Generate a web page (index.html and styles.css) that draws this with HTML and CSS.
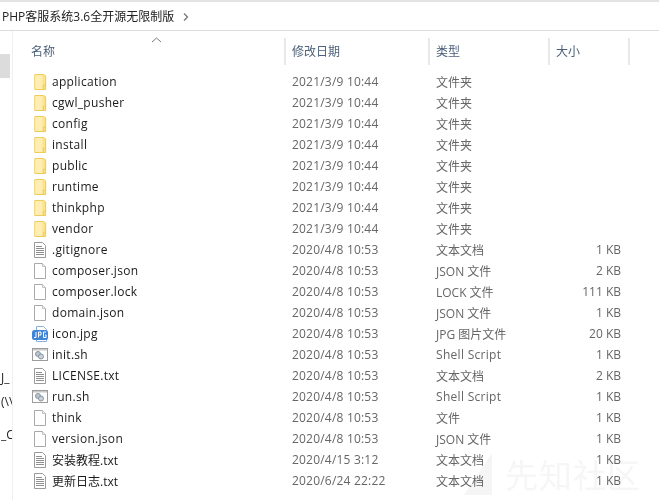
FILE: index.html
```html
<!DOCTYPE html>
<html lang="zh">
<head>
<meta charset="utf-8">
<title>PHP客服系统3.6全开源无限制版</title>
<link rel="stylesheet" href="styles.css">
</head>
<body>
<svg width="0" height="0" class="defs">
  <symbol id="folder" viewBox="0 0 16 17">
    <path d="M2.500 .5h9l2.500 1.500v14.500H2.500z" fill="#fde48a" stroke="#ecc84e"/>
    <path d="M3 1h7.500v15H3z" fill="#feeeb4"/>
    <path d="M11.500 16v-4h2" fill="none" stroke="#ecc84e"/>
  </symbol>
  <symbol id="doc" viewBox="0 0 16 16">
    <path d="M2.500 .5h8l3 3v12h-11z" fill="#fff" stroke="#a9a9a9"/>
    <path d="M10.500 .5v3h3" fill="#eee" stroke="#c4c4c4"/>
  </symbol>
  <symbol id="txt" viewBox="0 0 16 16">
    <path d="M2.500 .5h8l3 3v12h-11z" fill="#fff" stroke="#9a9a9a"/>
    <path d="M4 4.500h6M4 6.500h8M4 8.500h8M4 10.500h8M4 12.500h8" stroke="#8f8f8f"/>
  </symbol>
  <symbol id="jpg" viewBox="0 0 16 16">
    <path d="M4.500 .5h7l3 3v12h-10z" fill="#fff" stroke="#8db2dd"/>
    <rect x="0" y="4" width="16" height="10" rx="2.500" fill="#3f83d6"/>
    <path d="M4 6v5.500H2M6.500 11.500V6H9v3H6.500M14 6h-2.500v5.500H14V9h-1" fill="none" stroke="#fff"/>
  </symbol>
  <symbol id="sh" viewBox="0 0 16 16">
    <rect x=".5" y="1.500" width="15" height="12" fill="#fff" stroke="#9c9c9c"/>
    <rect x="1" y="2" width="14" height="1.500" fill="#c9c9c9"/>
    <circle cx="6" cy="7" r="2.500" fill="#b8c7d6" stroke="#8b959f"/>
    <circle cx="9" cy="9.500" r="2.500" fill="#c9d2da" stroke="#8b959f"/>
  </symbol>
</svg>

<nav class="crumb">
  <span>PHP客服系统3.6全开源无限制版</span>
  <svg class="chev" width="6" height="8" viewBox="0 0 6 8"><path d="M1 .5 4.500 4 1 7.500" fill="none" stroke="#777" stroke-width="1.300"/></svg>
</nav>

<div class="main">
  <aside class="side">
    <div class="selected"></div>
    <div class="frag f1">J_</div>
    <div class="frag f2">(\\</div>
    <div class="frag f3">_C</div>
  </aside>
  <section class="files">
    <svg class="sort" width="11" height="6" viewBox="0 0 11 6"><path d="M1 5 5.500 1 10 5" fill="none" stroke="#777"/></svg>
    <div class="head">
      <div class="hc">名称</div>
      <div class="hc">修改日期</div>
      <div class="hc">类型</div>
      <div class="hc">大小</div>
    </div>
    <div class="rows">
      <div class="row"><svg class="ico"><use href="#folder"/></svg><span class="name">application</span><span class="meta date">2021/3/9 10:44</span><span class="meta">文件夹</span><span class="size"></span></div>
      <div class="row"><svg class="ico"><use href="#folder"/></svg><span class="name">cgwl_pusher</span><span class="meta date">2021/3/9 10:44</span><span class="meta">文件夹</span><span class="size"></span></div>
      <div class="row"><svg class="ico"><use href="#folder"/></svg><span class="name">config</span><span class="meta date">2021/3/9 10:44</span><span class="meta">文件夹</span><span class="size"></span></div>
      <div class="row"><svg class="ico"><use href="#folder"/></svg><span class="name">install</span><span class="meta date">2021/3/9 10:44</span><span class="meta">文件夹</span><span class="size"></span></div>
      <div class="row"><svg class="ico"><use href="#folder"/></svg><span class="name">public</span><span class="meta date">2021/3/9 10:44</span><span class="meta">文件夹</span><span class="size"></span></div>
      <div class="row"><svg class="ico"><use href="#folder"/></svg><span class="name">runtime</span><span class="meta date">2021/3/9 10:44</span><span class="meta">文件夹</span><span class="size"></span></div>
      <div class="row"><svg class="ico"><use href="#folder"/></svg><span class="name">thinkphp</span><span class="meta date">2021/3/9 10:44</span><span class="meta">文件夹</span><span class="size"></span></div>
      <div class="row"><svg class="ico"><use href="#folder"/></svg><span class="name">vendor</span><span class="meta date">2021/3/9 10:44</span><span class="meta">文件夹</span><span class="size"></span></div>
      <div class="row"><svg class="ico"><use href="#txt"/></svg><span class="name">.gitignore</span><span class="meta date">2020/4/8 10:53</span><span class="meta">文本文档</span><span class="size">1 KB</span></div>
      <div class="row"><svg class="ico"><use href="#doc"/></svg><span class="name">composer.json</span><span class="meta date">2020/4/8 10:53</span><span class="meta">JSON 文件</span><span class="size">2 KB</span></div>
      <div class="row"><svg class="ico"><use href="#doc"/></svg><span class="name">composer.lock</span><span class="meta date">2020/4/8 10:53</span><span class="meta">LOCK 文件</span><span class="size">111 KB</span></div>
      <div class="row"><svg class="ico"><use href="#doc"/></svg><span class="name">domain.json</span><span class="meta date">2020/4/8 10:53</span><span class="meta">JSON 文件</span><span class="size">1 KB</span></div>
      <div class="row"><svg class="ico"><use href="#jpg"/></svg><span class="name">icon.jpg</span><span class="meta date">2020/4/8 10:53</span><span class="meta">JPG 图片文件</span><span class="size">20 KB</span></div>
      <div class="row"><svg class="ico"><use href="#sh"/></svg><span class="name">init.sh</span><span class="meta date">2020/4/8 10:53</span><span class="meta wide">Shell Script</span><span class="size">1 KB</span></div>
      <div class="row"><svg class="ico"><use href="#txt"/></svg><span class="name">LICENSE.txt</span><span class="meta date">2020/4/8 10:53</span><span class="meta">文本文档</span><span class="size">2 KB</span></div>
      <div class="row"><svg class="ico"><use href="#sh"/></svg><span class="name">run.sh</span><span class="meta date">2020/4/8 10:53</span><span class="meta wide">Shell Script</span><span class="size">1 KB</span></div>
      <div class="row"><svg class="ico"><use href="#doc"/></svg><span class="name">think</span><span class="meta date">2020/4/8 10:53</span><span class="meta">文件</span><span class="size">1 KB</span></div>
      <div class="row"><svg class="ico"><use href="#doc"/></svg><span class="name">version.json</span><span class="meta date">2020/4/8 10:53</span><span class="meta">JSON 文件</span><span class="size">1 KB</span></div>
      <div class="row"><svg class="ico"><use href="#txt"/></svg><span class="name cjk">安装教程.txt</span><span class="meta date">2020/4/15 3:12</span><span class="meta">文本文档</span><span class="size">1 KB</span></div>
      <div class="row"><svg class="ico"><use href="#txt"/></svg><span class="name cjk">更新日志.txt</span><span class="meta date">2020/6/24 22:22</span><span class="meta">文本文档</span><span class="size">1 KB</span></div>
    </div>
  </section>
</div>

<div class="mark">
  <svg width="34" height="46" viewBox="0 0 34 46"><path d="M30 2 2 44h28z" fill="#f5f5f5"/></svg>
  <span>先知社区</span>
</div>
</body>
</html>
```

FILE: styles.css
```css
* { box-sizing: border-box; }
html, body { margin: 0; padding: 0; height: 100%; }
body {
  width: 659px;
  height: 500px;
  overflow: hidden;
  background: #fff;
  position: relative;
  font-family: "Open Sans", "Noto Sans CJK SC", sans-serif;
  font-size: 12px;
  color: #1a1a1a;
}
.defs { position: absolute; }
.crumb {
  height: 31px;
  border-top: 2px solid #e3e3e3;
  border-bottom: 1px solid #dcdcdc;
  padding-left: 2px;
  display: flex;
  align-items: center;
  gap: 9px;
  color: #222;
}
.chev { margin-top: 1px; }
.main { display: flex; height: 469px; }
.side {
  width: 13px;
  flex: none;
  border-right: 1px solid #efefef;
  overflow: hidden;
  padding-top: 23px;
  color: #222;
}
.selected { width: 10px; height: 24px; background: #dcdcdc; }
.frag { white-space: nowrap; line-height: 16px; height: 16px; margin-left: 1px; }
.f1 { margin-top: 292px; }
.f2 { margin-top: 8px; }
.f3 { margin-top: 17px; }
.files { flex: 1; min-width: 0; position: relative; }
.sort { position: absolute; left: 138px; top: 6px; }
.head {
  display: grid;
  grid-template-columns: 273px 144px 120px 80px;
  padding-top: 7px;
  height: 40px;
}
.hc {
  height: 27px;
  line-height: 27px;
  padding-left: 18px;
  border-right: 2px solid #e8e8e8;
  color: #4c607a;
}
.hc + .hc { padding-left: 6px; }
.rows { display: flex; flex-direction: column; }
.row {
  height: 21px;
  display: grid;
  grid-template-columns: 16px 244px 144px 121px 64px;
  align-items: center;
  padding-left: 19px;
  white-space: nowrap;
}
.ico { width: 16px; height: 16px; }
.name { padding-left: 4px; color: #1a1a1a; letter-spacing: .3px; }
.name.cjk { letter-spacing: 0; }
.meta { color: #666; }
.date { letter-spacing: .2px; }
.wide { letter-spacing: .3px; }
.size { color: #666; text-align: right; }
.mark {
  position: absolute;
  left: 462px;
  top: 450px;
  display: flex;
  align-items: center;
  gap: 9px;
  font-size: 33px;
  letter-spacing: 1px;
  color: #f6f6f6;
  mix-blend-mode: multiply;
}
```
